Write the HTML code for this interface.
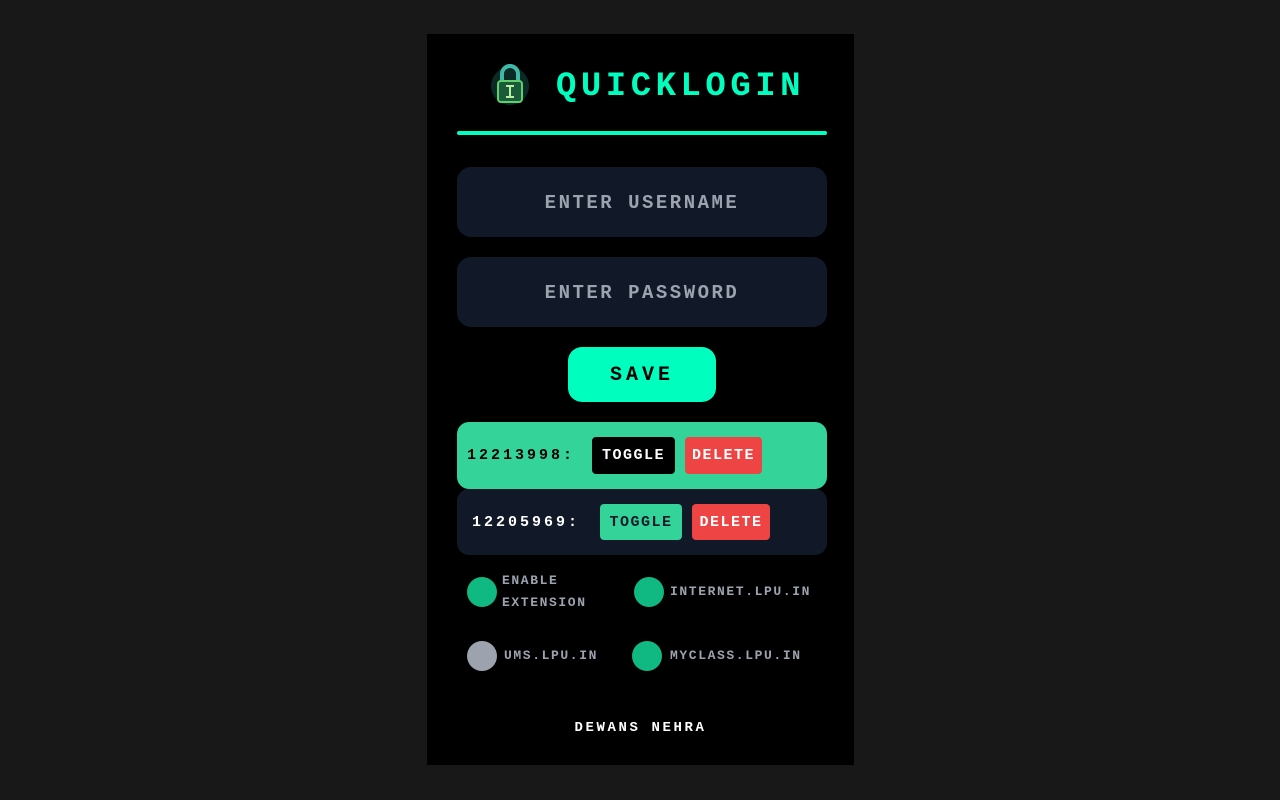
<!DOCTYPE html>
<html><head><style>
body{margin:0;background:#181818;width:1280px;height:800px;position:relative;font-family:"Liberation Mono",monospace;font-weight:bold}
.c{position:absolute;left:427px;top:34px;width:427px;height:731px;background:#000}
.a{position:absolute}
.t{text-transform:uppercase;white-space:nowrap}
.inp{position:absolute;left:30px;width:370px;height:70px;background:#111827;border-radius:14px;color:#9ca3af;font-size:19px;letter-spacing:2.5px;text-align:center;line-height:72px}
.btn{position:absolute;border-radius:4px;font-size:15px;letter-spacing:1.5px;text-align:center;line-height:38px;height:37px}
.dot{position:absolute;width:30px;height:30px;border-radius:50%;background:#10b981}
.lbl{position:absolute;color:#9ca3af;font-size:13px;letter-spacing:1.6px;line-height:22px}
</style></head><body>
<div class="c">
<svg class="a" style="left:62px;top:28px" width="42" height="44" viewBox="0 0 42 44">
<circle cx="21" cy="24" r="19" fill="#0b2a26"/>
<path d="M13 20 V12 a8 8 0 0 1 16 0 V20" fill="none" stroke="#3fb8a8" stroke-width="4"/>
<rect x="9" y="19" width="24" height="21" rx="3" fill="#1b5a3a" stroke="#5fd06a" stroke-width="2"/>
<path d="M17 24h8M21 24v11M17 35h8" stroke="#b8f0a0" stroke-width="2"/>
</svg>
<div class="a t" style="left:129px;top:33px;font-size:34px;color:#00ffbf;letter-spacing:4.5px;line-height:40px">QUICKLOGIN</div>
<div class="a" style="left:30px;top:97px;width:370px;height:4px;border-radius:2px;background:#00ffbf"></div>
<div class="inp t" style="top:133px">ENTER USERNAME</div>
<div class="inp t" style="top:223px">ENTER PASSWORD</div>
<div class="a t" style="left:141px;top:313px;width:148px;height:55px;border-radius:14px;background:#00ffbf;color:#000;font-size:20px;letter-spacing:4px;text-align:center;line-height:57px">SAVE</div>
<div class="a" style="left:30px;top:388px;width:370px;height:67px;border-radius:12px;background:#34d399"></div>
<div class="a t" style="left:40px;top:413px;font-size:15px;color:#000;letter-spacing:3px">12213998:</div>
<div class="btn" style="left:165px;top:403px;width:83px;background:#000;color:#fff">TOGGLE</div>
<div class="btn" style="left:258px;top:403px;width:77px;background:#ef4444;color:#fff">DELETE</div>
<div class="a" style="left:30px;top:455px;width:370px;height:66px;border-radius:12px;background:#111827"></div>
<div class="a t" style="left:45px;top:480px;font-size:15px;color:#fff;letter-spacing:3px">12205969:</div>
<div class="btn" style="left:173px;top:470px;width:82px;height:36px;background:#34d399;color:#111827">TOGGLE</div>
<div class="btn" style="left:265px;top:470px;width:78px;height:36px;background:#ef4444;color:#fff">DELETE</div>
<div class="dot" style="left:40px;top:543px"></div>
<div class="lbl" style="left:75px;top:536px">ENABLE<br>EXTENSION</div>
<div class="dot" style="left:207px;top:543px"></div>
<div class="lbl" style="left:243px;top:547px">INTERNET.LPU.IN</div>
<div class="dot" style="left:40px;top:607px;background:#9ca3af"></div>
<div class="lbl" style="left:77px;top:611px">UMS.LPU.IN</div>
<div class="dot" style="left:205px;top:607px"></div>
<div class="lbl" style="left:243px;top:611px">MYCLASS.LPU.IN</div>
<div class="a t" style="left:0;width:427px;text-align:center;top:686px;color:#fff;font-size:14px;letter-spacing:2.6px">DEWANS NEHRA</div>
</div>
</body></html>
